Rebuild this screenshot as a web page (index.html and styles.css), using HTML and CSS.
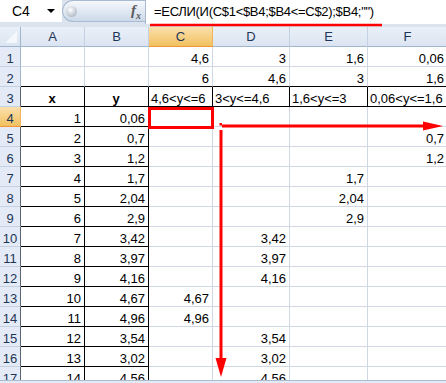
FILE: index.html
```html
<!DOCTYPE html>
<html lang="ru">
<head>
  <meta charset="UTF-8" />
  <title>Лист1</title>
  <link rel="stylesheet" href="styles.css">
</head>
<body>
  <div class="sheet">
    <div class="fbar">
      <div class="namebox"><span>C4</span><span class="dd"></span></div>
      <div class="grip"><span class="knob"></span><span class="fx">f<sub>x</sub></span></div>
      <div class="formula">=ЕСЛИ(И(C$1&lt;$B4;$B4&lt;=C$2);$B4;"")</div>
    </div>

    <div class="grid">
      <div class="h corner"></div><div class="h">A</div><div class="h">B</div><div class="h s">C</div><div class="h">D</div><div class="h">E</div><div class="h">F</div>

      <div class="r">1</div><div class="c"></div><div class="c"></div><div class="c n">4,6</div><div class="c n">3</div><div class="c n">1,6</div><div class="c n">0,06</div>
      <div class="r">2</div><div class="c kb"></div><div class="c kb"></div><div class="c n kb">6</div><div class="c n kb">4,6</div><div class="c n kb">3</div><div class="c n kb">1,6</div>
      <div class="r kr">3</div><div class="c k t">x</div><div class="c k t">y</div><div class="c k">4,6&lt;y&lt;=6</div><div class="c k">3&lt;y&lt;=4,6</div><div class="c k">1,6&lt;y&lt;=3</div><div class="c k">0,06&lt;y&lt;=1,6</div>
      <div class="r kr s">4</div><div class="c k n">1</div><div class="c k n">0,06</div><div class="c"></div><div class="c"></div><div class="c"></div><div class="c"></div>
      <div class="r kr">5</div><div class="c k n">2</div><div class="c k n">0,7</div><div class="c"></div><div class="c"></div><div class="c"></div><div class="c n">0,7</div>
      <div class="r kr">6</div><div class="c k n">3</div><div class="c k n">1,2</div><div class="c"></div><div class="c"></div><div class="c"></div><div class="c n">1,2</div>
      <div class="r kr">7</div><div class="c k n">4</div><div class="c k n">1,7</div><div class="c"></div><div class="c"></div><div class="c n">1,7</div><div class="c"></div>
      <div class="r kr">8</div><div class="c k n">5</div><div class="c k n">2,04</div><div class="c"></div><div class="c"></div><div class="c n">2,04</div><div class="c"></div>
      <div class="r kr">9</div><div class="c k n">6</div><div class="c k n">2,9</div><div class="c"></div><div class="c"></div><div class="c n">2,9</div><div class="c"></div>
      <div class="r kr">10</div><div class="c k n">7</div><div class="c k n">3,42</div><div class="c"></div><div class="c n">3,42</div><div class="c"></div><div class="c"></div>
      <div class="r kr">11</div><div class="c k n">8</div><div class="c k n">3,97</div><div class="c"></div><div class="c n">3,97</div><div class="c"></div><div class="c"></div>
      <div class="r kr">12</div><div class="c k n">9</div><div class="c k n">4,16</div><div class="c"></div><div class="c n">4,16</div><div class="c"></div><div class="c"></div>
      <div class="r kr">13</div><div class="c k n">10</div><div class="c k n">4,67</div><div class="c n">4,67</div><div class="c"></div><div class="c"></div><div class="c"></div>
      <div class="r kr">14</div><div class="c k n">11</div><div class="c k n">4,96</div><div class="c n">4,96</div><div class="c"></div><div class="c"></div><div class="c"></div>
      <div class="r kr">15</div><div class="c k n">12</div><div class="c k n">3,54</div><div class="c"></div><div class="c n">3,54</div><div class="c"></div><div class="c"></div>
      <div class="r kr">16</div><div class="c k n">13</div><div class="c k n">3,02</div><div class="c"></div><div class="c n">3,02</div><div class="c"></div><div class="c"></div>
      <div class="r kr">17</div><div class="c k n">14</div><div class="c k n">4,56</div><div class="c"></div><div class="c n">4,56</div><div class="c"></div><div class="c"></div>
    </div>

    <div class="hscroll"></div>

    <svg class="marks" width="446" height="383" viewBox="0 0 446 383">
      <line x1="150" y1="25" x2="382" y2="25" stroke="#f00" stroke-width="2.5"/>
      <rect x="149.5" y="108.5" width="63" height="19" fill="none" stroke="#f00" stroke-width="3"/>
      <rect x="219.5" y="123" width="2.5" height="2.5" fill="#f00"/>
      <line x1="222" y1="126" x2="426" y2="126" stroke="#f00" stroke-width="3"/>
      <polygon points="423,121.5 443,126 423,130.5" fill="#f00"/>
      <line x1="221" y1="130" x2="221" y2="362" stroke="#f00" stroke-width="3"/>
      <polygon points="215.5,358 226.5,358 221,377" fill="#f00"/>
    </svg>
  </div>
</body>
</html>
```

FILE: styles.css
```css
* { box-sizing: border-box; margin: 0; padding: 0; }
body { font-family: "Liberation Sans", Arial, sans-serif; font-size: 13px; color: #000; background: #fff; }

.sheet {
  position: relative;
  width: 446px;
  height: 383px;
  overflow: hidden;
}

/* formula bar */
.fbar {
  display: flex;
  align-items: flex-start;
  height: 27px;
  background: #dbe3ee;
}

.namebox {
  width: 62px;
  height: 22px;
  background: #fff;
  display: flex;
  align-items: center;
  justify-content: space-between;
  padding: 0 7px 0 12px;
  font-size: 14px;
}

.dd {
  width: 0;
  height: 0;
  border-left: 4px solid transparent;
  border-right: 4px solid transparent;
  border-top: 4px solid #000;
}

.grip {
  width: 83px;
  height: 22px;
  display: flex;
  align-items: center;
  justify-content: space-between;
  padding: 0 4px 0 3px;
  background: linear-gradient(#f5f8fc, #cdd9e9);
  border: 1px solid #a8bbd3;
  border-right: 0;
  border-radius: 11px 0 0 11px;
}

.knob {
  width: 11px;
  height: 11px;
  border-radius: 50%;
  background: radial-gradient(circle at 40% 35%, #fff, #97a5b6);
}

.fx {
  font-family: "Liberation Serif", serif;
  font-style: italic;
  font-weight: bold;
  font-size: 15px;
  color: #5a5a5a;
}

.fx sub { font-size: 10px; }

.formula {
  flex: 1;
  height: 24px;
  background: #fff;
  border-left: 1px solid #a8bbd3;
  padding: 4px 0 0 8px;
  white-space: nowrap;
  letter-spacing: -0.3px;
}

/* cells */
.grid {
  display: grid;
  grid-template-columns: 21px 64px 64px 64px 77px 78px 80px;
  grid-auto-rows: 20px;
}

.c, .r, .h {
  display: flex;
  align-items: flex-end;
  line-height: 15px;
  white-space: nowrap;
  overflow: hidden;
  border-right: 1px solid #d0d7e5;
  border-bottom: 1px solid #d0d7e5;
}

.c { padding: 0 3px 0 2px; }
.n { justify-content: flex-end; }
.t { justify-content: center; font-weight: bold; }

.k { border-color: #000; }
.kb { border-bottom-color: #000; }

.h, .r {
  justify-content: center;
  color: #1d3557;
  background: linear-gradient(#eaf0f8, #dbe4f1);
  border-right-color: #9eb6ce;
  border-bottom-color: #c3d1e2;
}

.h {
  align-items: center;
  border-right-color: #c3d1e2;
  border-bottom-color: #9eb6ce;
}

.r { background: #e4ebf6; }
.r.kr { border-right-color: #5c6673; }

.h.s, .r.s {
  background: linear-gradient(#fae0ad, #f1c15f);
  border-bottom-color: #f29536;
  border-right-color: #f2b45b;
}

.corner {
  position: relative;
  border-right-color: #9eb6ce;
}

.corner::after {
  content: "";
  position: absolute;
  right: 3px;
  bottom: 3px;
  border-left: 12px solid transparent;
  border-bottom: 12px solid #f4f7fb;
}

.hscroll {
  position: absolute;
  left: 0;
  bottom: 0;
  width: 100%;
  height: 3px;
  border-top: 1px solid #a9bcd4;
  background: #e3eaf4;
}

.marks {
  position: absolute;
  top: 0;
  left: 0;
  pointer-events: none;
}
```
